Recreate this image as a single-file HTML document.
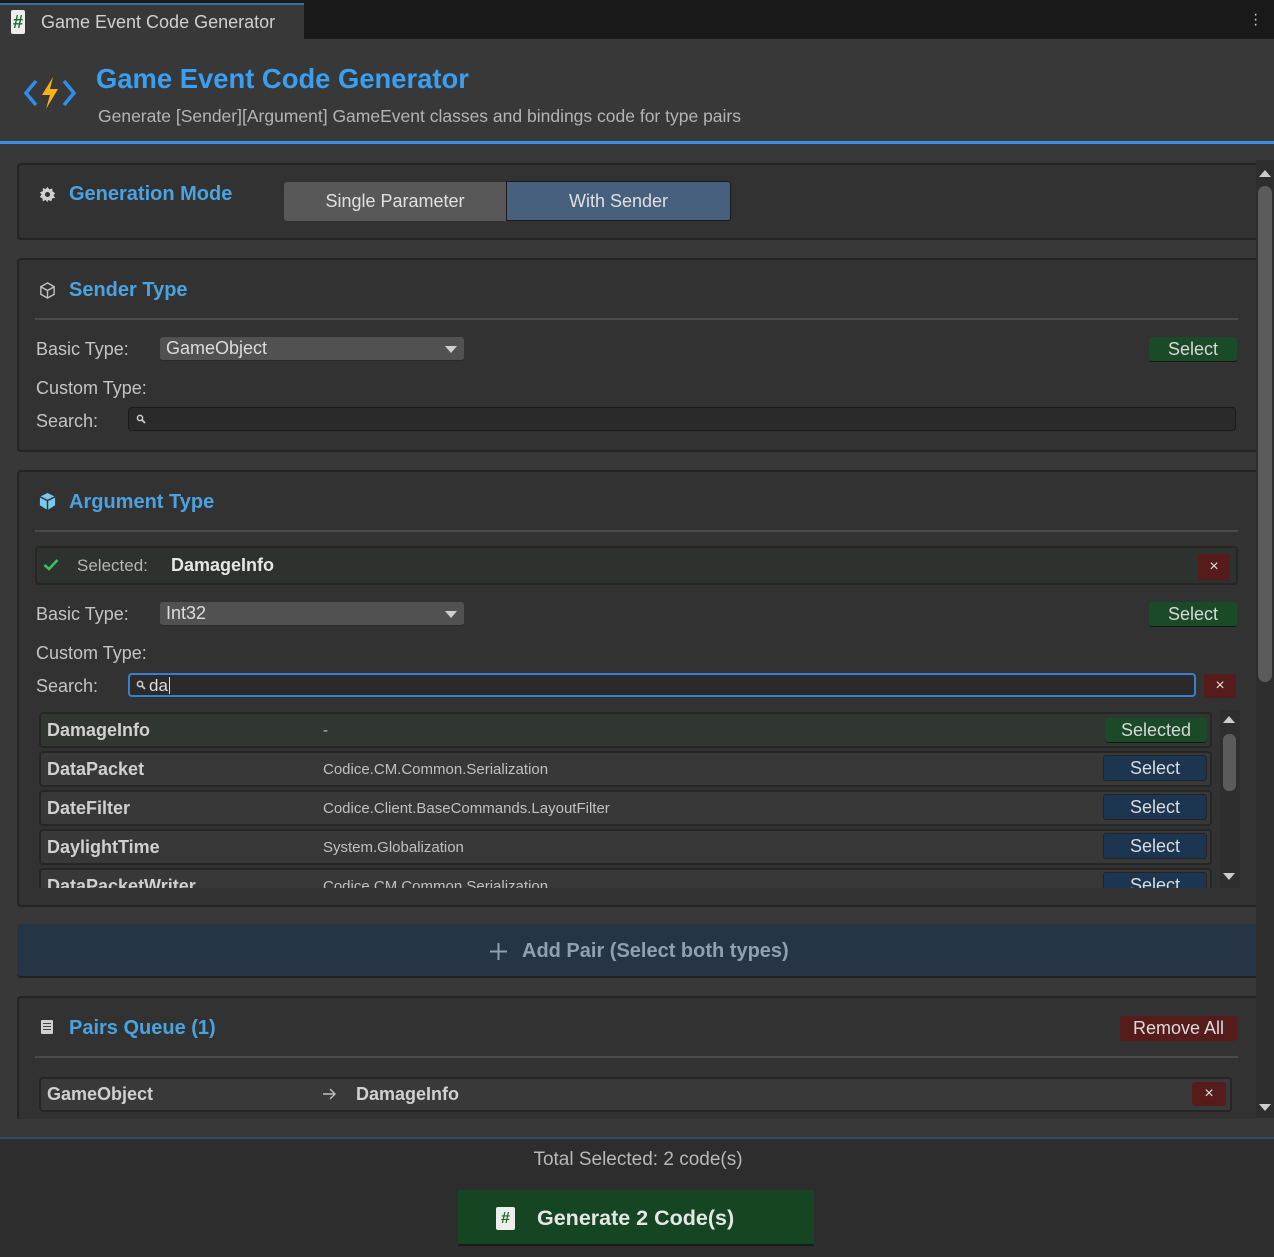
<!DOCTYPE html>
<html><head><meta charset="utf-8"><style>
*{box-sizing:border-box;margin:0;padding:0}
body{width:1274px;height:1257px;background:#383838;font-family:"Liberation Sans",sans-serif;color:#c8c8c8;position:relative;overflow:hidden}
.a{position:absolute}
.panel{position:absolute;left:17px;width:1239px;background:#323232;border:2px solid #242424;border-right:none;border-radius:4px 0 0 4px}
.title{position:absolute;font-size:20px;font-weight:bold;color:#4aa3e0}
.lbl{position:absolute;font-size:18px;color:#c4c4c4}
.hr{position:absolute;left:35px;width:1203px;height:2px;background:#4a4a4a}
.drop{position:absolute;left:160px;width:304px;height:24px;background:#515151;border-radius:3px;border-bottom:1px solid #2a2a2a;font-size:18px;color:#dcdcdc;padding-left:6px;line-height:23px}
.drop:after{content:"";position:absolute;right:7px;top:9px;border-left:6px solid transparent;border-right:6px solid transparent;border-top:7px solid #d0d0d0}
.gbtn{position:absolute;background:#1a4a28;color:#d8d8d8;font-size:18px;text-align:center;border-radius:3px;border-bottom:1px solid #161616}
.bbtn{position:absolute;left:1103px;width:104px;height:26px;background:#1c3550;color:#dcdcdc;font-size:18px;text-align:center;line-height:25px;border-radius:3px;border:1px solid #242424}
.xbtn{position:absolute;background:#561c1c;color:#e0e0e0;font-size:16px;text-align:center;border-radius:3px}
.search{position:absolute;left:128px;height:24px;background:#2a2a2a;border:1px solid #1a1a1a;border-radius:4px}
.row{position:absolute;left:39px;width:1173px;height:36px;background:#383838;border:2px solid #262626;border-radius:4px}
.row .n{position:absolute;left:6px;top:6px;font-size:18px;font-weight:bold;color:#d0d0d0}
.row .s{position:absolute;left:282px;top:8px;font-size:15px;color:#c0c0c0}
</style></head><body>
<div class="a" style="left:0;top:0;width:1274px;height:39px;background:#191919"></div>
<div class="a" style="left:0;top:3px;width:304px;height:36px;background:#383838;border-top:2px solid #3a6ea5"></div>
<div class="a" style="left:11px;top:10px;width:14px;height:24px;background:#eee;border-radius:2px;color:#1a6b2a;font-size:18px;font-weight:bold;text-align:center;line-height:24px">#</div>
<div class="a" style="left:41px;top:12px;font-size:18px;color:#d0d0d0">Game Event Code Generator</div>
<div class="a" style="left:1253px;top:12px;font-size:16px;color:#ccc;line-height:5px">·<br>·<br>·</div>
<svg class="a" style="left:23px;top:75px" width="54" height="36" viewBox="0 0 54 36"><path d="M13 6 L3 18 L13 30" stroke="#2f8fe8" stroke-width="3.5" fill="none"/><path d="M41 6 L51 18 L41 30" stroke="#2f8fe8" stroke-width="3.5" fill="none"/><path d="M30 2 L19 20 L27 20 L23 34 L35 14 L27 14 Z" fill="#f5b31a"/></svg>
<div class="a" style="left:96px;top:63px;font-size:27.4px;font-weight:bold;color:#3a9ff0">Game Event Code Generator</div>
<div class="a" style="left:98px;top:106px;font-size:17.5px;color:#b4b4b4">Generate [Sender][Argument] GameEvent classes and bindings code for type pairs</div>
<div class="a" style="left:0;top:141px;width:1274px;height:3px;background:#3a8fe0"></div>
<div class="a" style="left:1256px;top:160px;width:18px;height:958px;background:#2e2e2e"></div>
<div class="a" style="left:1258px;top:186px;width:14px;height:496px;background:#5b5b5b;border-radius:7px"></div>
<div class="a" style="left:1259px;top:170px;border-left:6px solid transparent;border-right:6px solid transparent;border-bottom:7px solid #ccc"></div>
<div class="a" style="left:1259px;top:1104px;border-left:6px solid transparent;border-right:6px solid transparent;border-top:7px solid #ccc"></div>
<div class="panel" style="top:163px;height:77px"></div>
<svg class="a" style="left:39px;top:186px" width="17" height="17" viewBox="0 0 20 20"><path d="M10 1 L12 4 L15.5 3 L16 6.5 L19 8.5 L17 11 L19 14 L15.5 14.5 L14.5 18 L11 16.5 L10 19 L8 16.5 L4.5 18 L4 14.5 L1 13 L3 10 L1 7.5 L4.5 6 L4.5 2.5 L8 3.5 Z" fill="#d0d0d0"/><circle cx="10" cy="10" r="3" fill="#323232"/></svg>
<div class="title" style="left:69px;top:183px">Generation Mode</div>
<div class="a" style="left:284px;top:182px;width:222px;height:39px;background:#585858;border-radius:3px 0 0 3px;font-size:18px;color:#e0e0e0;text-align:center;line-height:39px">Single Parameter</div>
<div class="a" style="left:506px;top:181px;width:225px;height:40px;background:#46607e;border:1px solid #1a1a1a;border-radius:0 3px 3px 0;font-size:18px;color:#e0e0e0;text-align:center;line-height:38px">With Sender</div>
<div class="panel" style="top:258px;height:194px"></div>
<svg class="a" style="left:38px;top:281px" width="19" height="19" viewBox="0 0 20 20"><path d="M10 2 L17 6 V14 L10 18 L3 14 V6 Z M3 6 L10 10 L17 6 M10 10 V18" stroke="#c0c0c0" stroke-width="1.5" fill="none"/></svg>
<div class="title" style="left:69px;top:279px">Sender Type</div>
<div class="hr" style="top:318px"></div>
<div class="lbl" style="left:36px;top:339px">Basic Type:</div>
<div class="drop" style="top:337px">GameObject</div>
<div class="gbtn" style="left:1149px;top:337px;width:88px;height:25px;line-height:24px">Select</div>
<div class="lbl" style="left:36px;top:378px">Custom Type:</div>
<div class="lbl" style="left:36px;top:411px">Search:</div>
<div class="search" style="top:407px;width:1108px"><svg class="a" style="left:7px;top:6px" width="10" height="10" viewBox="0 0 10 10"><circle cx="4" cy="4" r="2.6" stroke="#ccc" stroke-width="1.5" fill="none"/><path d="M6 6 L9 9" stroke="#ccc" stroke-width="1.8"/></svg></div>
<div class="panel" style="top:470px;height:437px"></div>
<svg class="a" style="left:38px;top:492px" width="19" height="19" viewBox="0 0 20 20"><path d="M10 1 L18 5 V14 L10 19 L2 14 V5 Z" fill="#7cc7ee"/><path d="M2 5 L10 9 L18 5 M10 9 V19" stroke="#323232" stroke-width="1.5" fill="none"/></svg>
<div class="title" style="left:69px;top:491px">Argument Type</div>
<div class="hr" style="top:530px"></div>
<div class="a" style="left:35px;top:546px;width:1203px;height:39px;background:#2d322f;border:2px solid #262626;border-radius:4px"></div>
<svg class="a" style="left:43px;top:558px" width="16" height="13" viewBox="0 0 16 13"><path d="M1.5 7 L6 11 L14.5 2" stroke="#3bc060" stroke-width="2.6" fill="none"/></svg>
<div class="a" style="left:77px;top:556px;font-size:17px;color:#b4b4b4">Selected:</div>
<div class="a" style="left:171px;top:555px;font-size:18px;font-weight:bold;color:#e6e6e6">DamageInfo</div>
<div class="xbtn" style="left:1198px;top:554px;width:32px;height:26px;line-height:26px">×</div>
<div class="lbl" style="left:36px;top:604px">Basic Type:</div>
<div class="drop" style="top:602px">Int32</div>
<div class="gbtn" style="left:1149px;top:602px;width:88px;height:25px;line-height:24px">Select</div>
<div class="lbl" style="left:36px;top:643px">Custom Type:</div>
<div class="lbl" style="left:36px;top:676px">Search:</div>
<div class="search" style="top:673px;width:1068px;border:2px solid #3a7fcf;background:#2a2a2a"><svg class="a" style="left:6px;top:5px" width="10" height="10" viewBox="0 0 10 10"><circle cx="4" cy="4" r="2.6" stroke="#ccc" stroke-width="1.5" fill="none"/><path d="M6 6 L9 9" stroke="#ccc" stroke-width="1.8"/></svg><span class="a" style="left:19px;top:1px;font-size:17px;color:#ddd">da</span><span class="a" style="left:39px;top:2px;width:1px;height:17px;background:#ddd"></span></div>
<div class="xbtn" style="left:1204px;top:674px;width:32px;height:24px;line-height:24px">×</div>
<div class="a" style="left:37px;top:710px;width:1203px;height:178px;overflow:hidden">
 <div class="row" style="left:2px;top:2px;background:#303630"><span class="n">DamageInfo</span><span class="s">-</span><div class="gbtn" style="left:1064px;top:4px;width:102px;height:25px;line-height:24px">Selected</div></div>
 <div class="row" style="left:2px;top:41px"><span class="n">DataPacket</span><span class="s">Codice.CM.Common.Serialization</span></div>
 <div class="row" style="left:2px;top:80px"><span class="n">DateFilter</span><span class="s">Codice.Client.BaseCommands.LayoutFilter</span></div>
 <div class="row" style="left:2px;top:119px"><span class="n">DaylightTime</span><span class="s">System.Globalization</span></div>
 <div class="row" style="left:2px;top:158px"><span class="n">DataPacketWriter</span><span class="s">Codice.CM.Common.Serialization</span></div>
 <div class="bbtn" style="left:1066px;top:45px">Select</div>
 <div class="bbtn" style="left:1066px;top:84px">Select</div>
 <div class="bbtn" style="left:1066px;top:123px">Select</div>
 <div class="bbtn" style="left:1066px;top:162px">Select</div>
 <div class="a" style="left:1183px;top:0;width:20px;height:178px;background:#2e2e2e"></div>
 <div class="a" style="left:1186px;top:24px;width:13px;height:57px;background:#5b5b5b;border-radius:6px"></div>
 <div class="a" style="left:1186px;top:6px;border-left:6px solid transparent;border-right:6px solid transparent;border-bottom:7px solid #ccc"></div>
 <div class="a" style="left:1186px;top:163px;border-left:6px solid transparent;border-right:6px solid transparent;border-top:7px solid #ccc"></div>
</div>
<div class="a" style="left:17px;top:924px;width:1239px;height:54px;background:#253546;border-radius:4px 0 0 4px;border-bottom:2px solid #222"></div>
<svg class="a" style="left:489px;top:942px" width="19" height="19" viewBox="0 0 19 19"><path d="M9.5 1 V18 M1 9.5 H18" stroke="#8fa0b2" stroke-width="2"/></svg>
<div class="a" style="left:522px;top:940px;font-size:20px;font-weight:bold;color:#8fa0b2">Add Pair (Select both types)</div>
<div class="panel" style="top:996px;height:140px"></div>
<div class="a" style="left:41px;top:1020px;width:12px;height:14px;background:#d0d0d0;border-radius:1px"><div style="margin:3px 2px;height:1px;background:#444;box-shadow:0 3px #444,0 6px #444"></div></div>
<div class="title" style="left:69px;top:1017px">Pairs Queue (1)</div>
<div class="a" style="left:1120px;top:1016px;width:117px;height:25px;background:#561c1c;color:#dcdcdc;font-size:18px;text-align:center;line-height:24px;border-radius:3px">Remove All</div>
<div class="hr" style="top:1056px"></div>
<div class="a" style="left:39px;top:1077px;width:1193px;height:35px;background:#393939;border:2px solid #262626;border-radius:4px"></div>
<div class="a" style="left:47px;top:1084px;font-size:18px;font-weight:bold;color:#d0d0d0">GameObject</div>
<svg class="a" style="left:322px;top:1088px" width="14" height="12" viewBox="0 0 14 12"><path d="M1 6 H13 M8 1 L13 6 L8 11" stroke="#c0c0c0" stroke-width="1.4" fill="none"/></svg>
<div class="a" style="left:356px;top:1084px;font-size:18px;font-weight:bold;color:#d0d0d0">DamageInfo</div>
<div class="xbtn" style="left:1192px;top:1082px;width:34px;height:24px;line-height:24px">×</div>
<div class="a" style="left:0;top:1119px;width:1274px;height:20px;background:#383838"></div>
<div class="a" style="left:0;top:1137px;width:1274px;height:120px;background:#2d2d2d;border-top:2px solid #2c4b6b"></div>
<div class="a" style="left:0;top:1149px;width:1276px;text-align:center;font-size:19px;color:#b8b8b8">Total Selected: 2 code(s)</div>
<div class="a" style="left:458px;top:1190px;width:356px;height:56px;background:#154522;border-bottom:2px solid #1a1a1a"></div>
<div class="a" style="left:496px;top:1207px;width:19px;height:23px;background:#eee;border-radius:2px;color:#1a6b2a;font-size:16px;font-weight:bold;text-align:center;line-height:23px">#</div>
<div class="a" style="left:537px;top:1206px;font-size:21.5px;font-weight:bold;color:#e6e6e6">Generate 2 Code(s)</div>
</body></html>
